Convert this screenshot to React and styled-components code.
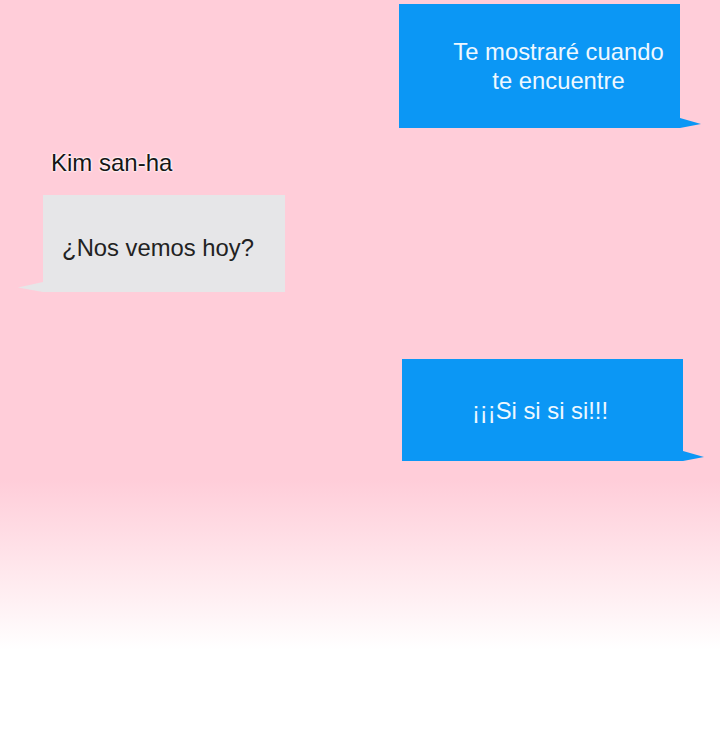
import React from "react";
import styled, { createGlobalStyle } from "styled-components";

const GlobalStyle = createGlobalStyle`
  html, body {
    margin: 0;
    padding: 0;
  }
  body {
    font-family: "Liberation Sans", Arial, sans-serif;
  }
`;

const Page = styled.div`
  width: 720px;
  height: 747px;
  overflow: hidden;
  background: linear-gradient(
    to bottom,
    #ffcdd9 0,
    #ffcdd9 480px,
    #fff0f3 600px,
    #ffffff 650px
  );
  display: flex;
  flex-direction: column;
`;

const Row = styled.div`
  display: flex;
  justify-content: ${(p) => (p.$mine ? "flex-end" : "flex-start")};
  padding: ${(p) => p.$pad};
`;

const Bubble = styled.div`
  position: relative;
  box-sizing: border-box;
  width: ${(p) => p.$w}px;
  height: ${(p) => p.$h}px;
  display: flex;
  align-items: center;
  justify-content: center;
  text-align: center;
  font-size: 23.8px;
  line-height: 29px;
  background: ${(p) => (p.$mine ? "#0b97f5" : "#e6e6e8")};
  color: ${(p) => (p.$mine ? "#eef8ff" : "#222")};
  padding: ${(p) => p.$pad || "0"};

  &::after {
    content: "";
    position: absolute;
    bottom: 0;
    width: ${(p) => (p.$mine ? 21 : 25)}px;
    height: 10px;
    background: inherit;
    ${(p) =>
      p.$mine
        ? "right: -21px; clip-path: polygon(0 0, 100% 60%, 0 100%);"
        : "left: -25px; clip-path: polygon(100% 0, 0 55%, 100% 100%);"}
  }
`;

const Name = styled.div`
  font-size: 24px;
  color: #161616;
  line-height: 26px;
  text-shadow: 0 0 2px #fff, 0 0 2px #fff, 0 0 3px #fff;
  padding: 22px 0 0 51px;
`;

export default function App() {
  return (
    <Page>
      <GlobalStyle />
      <Row $mine $pad="4px 40px 0 0">
        <Bubble $mine $w={281} $h={124} $pad="0 0 0 38px">
          Te mostraré cuando
          <br />
          te encuentre
        </Bubble>
      </Row>
      <Name>Kim san-ha</Name>
      <Row $pad="19px 0 0 43px">
        <Bubble $w={242} $h={97} $pad="8px 12px 0 0">
          ¿Nos vemos hoy?
        </Bubble>
      </Row>
      <Row $mine $pad="67px 37px 0 0">
        <Bubble $mine $w={281} $h={102} $pad="0 5px 0 0">
          ¡¡¡Si si si si!!!
        </Bubble>
      </Row>
    </Page>
  );
}
